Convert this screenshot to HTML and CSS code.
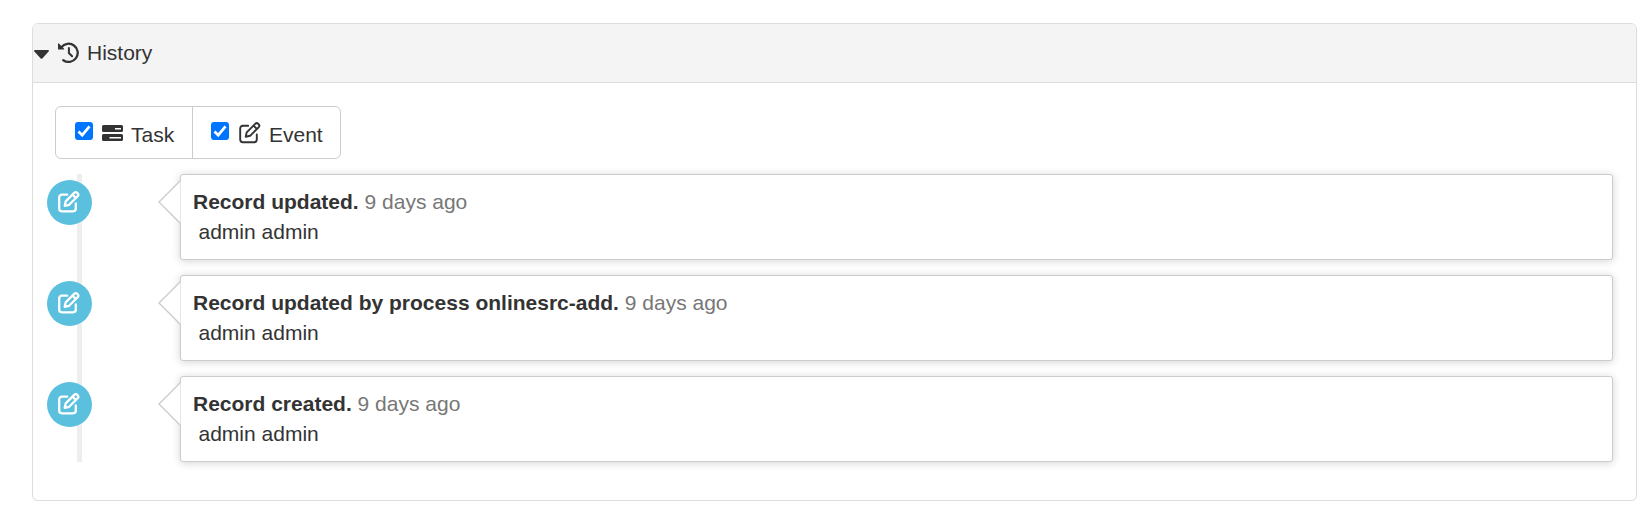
FILE: index.html
```
<!DOCTYPE html>
<html lang="en">
<head>
<meta charset="utf-8">
<title>History</title>
<link rel="stylesheet" href="styles.css">
</head>
<body>
<svg class="defs" width="0" height="0">
  <symbol id="edit" viewBox="0 0 22 22">
    <path d="M9.200 3.700H3.900A2.700 2.700 0 0 0 1.200 6.400v11.200a2.700 2.700 0 0 0 2.700 2.700h11.200a2.700 2.700 0 0 0 2.700-2.700V12.500M6.700 14.800l1-4.400 8.500-8.500a2.200 2.200 0 0 1 3.100 0l.3.3a2.200 2.200 0 0 1 0 3.100l-8.500 8.500zM14.600 3.700l3.200 3.200" fill="none" stroke="currentColor" stroke-linecap="round" stroke-linejoin="round"/>
  </symbol>
</svg>
<section class="panel">
  <header class="panel-head">
    <svg class="caret" viewBox="0 0 15 9"><path d="M1 0h13c1 0 1.300.8.6 1.500L8.300 8.500q-.8.7-1.600 0L.4 1.500C-.3.8 0 0 1 0z"/></svg>
    <svg class="clock" viewBox="0 0 21 22"><path d="M3.300 5.400A9.100 9.100 0 1 1 5.300 18.200" fill="none" stroke="currentColor" stroke-width="2.300" stroke-linecap="round"/><path d="M.6 1.200q-.6 0-.6.700v5q0 .7.700.7h5q.9-.2.400-.9z" fill="currentColor"/><path d="M10.900 6v5l3.200 3.200" fill="none" stroke="currentColor" stroke-width="2" stroke-linecap="round"/></svg>
    <span>History</span>
  </header>
  <div class="panel-body">
    <div class="filters">
      <label class="filter"><span class="check"><svg viewBox="0 0 18 18"><path d="M3.500 9.500l3.700 3.700 7.300-8.800"/></svg></span><svg class="icon" viewBox="0 0 21 21"><path fill-rule="evenodd" d="M1.500 2h18A1.500 1.500 0 0 1 21 3.500v4A1.500 1.500 0 0 1 19.500 9h-18A1.500 1.500 0 0 1 0 7.500v-4A1.500 1.500 0 0 1 1.500 2zm11.500 3v1.500h6V5zM1.500 11h18a1.500 1.500 0 0 1 1.500 1.500v4a1.500 1.500 0 0 1-1.500 1.500h-18A1.500 1.500 0 0 1 0 16.500v-4A1.500 1.500 0 0 1 1.500 11zm6 3v1.500H19V14z"/></svg><span>Task</span></label>
      <label class="filter"><span class="check"><svg viewBox="0 0 18 18"><path d="M3.500 9.500l3.700 3.700 7.300-8.800"/></svg></span><svg class="icon edit"><use href="#edit"/></svg><span>Event</span></label>
    </div>
    <ul class="timeline">
      <li class="entry"><span class="badge"><svg><use href="#edit"/></svg></span><div class="card"><svg class="arrow" viewBox="0 0 24 44"><path d="M22.500 .5L1 22l21.500 21.500"/></svg><p><b>Record updated.</b> <span class="muted">9 days ago</span></p><p class="who">admin admin</p></div></li>
      <li class="entry"><span class="badge"><svg><use href="#edit"/></svg></span><div class="card"><svg class="arrow" viewBox="0 0 24 44"><path d="M22.500 .5L1 22l21.500 21.500"/></svg><p><b>Record updated by process onlinesrc-add.</b> <span class="muted">9 days ago</span></p><p class="who">admin admin</p></div></li>
      <li class="entry"><span class="badge"><svg><use href="#edit"/></svg></span><div class="card"><svg class="arrow" viewBox="0 0 24 44"><path d="M22.500 .5L1 22l21.500 21.500"/></svg><p><b>Record created.</b> <span class="muted">9 days ago</span></p><p class="who">admin admin</p></div></li>
    </ul>
  </div>
</section>
</body>
</html>
```

FILE: styles.css
```
* { box-sizing: border-box; }
body {
  margin: 0;
  padding: 23px 7px 0 32px;
  background: #fff;
  color: #333;
  font: 21px/30px "Liberation Sans", Arial, sans-serif;
}
.defs { position: absolute; }
.panel {
  height: 478px;
  border: 1px solid #ddd;
  border-radius: 6px;
  box-shadow: 0 1px 1px rgba(0, 0, 0, .05);
}
.panel-head {
  display: flex;
  align-items: center;
  height: 59px;
  padding-left: 1px;
  border-bottom: 1px solid #ddd;
  border-radius: 5px 5px 0 0;
  background: #f4f4f4;
}
.caret { width: 15px; height: 9px; margin: 3px 9px 0 0; fill: #333; }
.clock { width: 21px; height: 22px; margin: 0 8px 1px 0; }
.panel-body { padding: 23px 23px 0 22px; }
.filters {
  display: flex;
  width: 286px;
  height: 53px;
  border: 1px solid #ccc;
  border-radius: 6px;
}
.filter { display: flex; width: 136px; padding: 13px 0 0 19px; }
.filter + .filter { width: 148px; padding-left: 18px; border-left: 1px solid #ccc; }
.check {
  width: 18px;
  height: 18px;
  margin: 2px 9px 0 0;
  border-radius: 3px;
  background: #0075ff;
}
.check svg { display: block; width: 18px; height: 18px; fill: none; stroke: #fff; stroke-width: 2.700; }
.filter:first-child .check { margin-left: -.5px; }
.icon { width: 21px; height: 21px; margin: 3px 8.5px 0 0; fill: #333; }
.icon.edit { width: 22px; height: 22px; margin: 2px 8px 0 1px; stroke-width: 1.900; }
.timeline {
  display: flex;
  flex-direction: column;
  gap: 15px;
  margin: 15px 0 0 -8px;
  padding: 0;
  list-style: none;
  background: linear-gradient(#eee, #eee) 30px 0 / 5px 100% no-repeat;
}
.entry { display: flex; height: 86px; }
.badge {
  display: flex;
  width: 45px;
  height: 45px;
  margin: 6px 88px 0 0;
  padding: 11px;
  border-radius: 50%;
  background: #5bc0de;
  color: #fff;
}
.badge svg { width: 22px; height: 22px; stroke-width: 2.300; }
.card {
  position: relative;
  flex: 1;
  padding: 12px 12px 0;
  border: 1px solid #ccc;
  border-radius: 3px;
  background: #fff;
  box-shadow: 0 1px 9px rgba(0, 0, 0, .175);
}
.arrow {
  position: absolute;
  top: 5px;
  left: -23px;
  width: 24px;
  height: 44px;
  fill: #fff;
  stroke: #ccc;
  stroke-width: 1.400;
}
p { margin: 0; }
.who { padding-left: 5.5px; }
.muted { color: #777; }
```
